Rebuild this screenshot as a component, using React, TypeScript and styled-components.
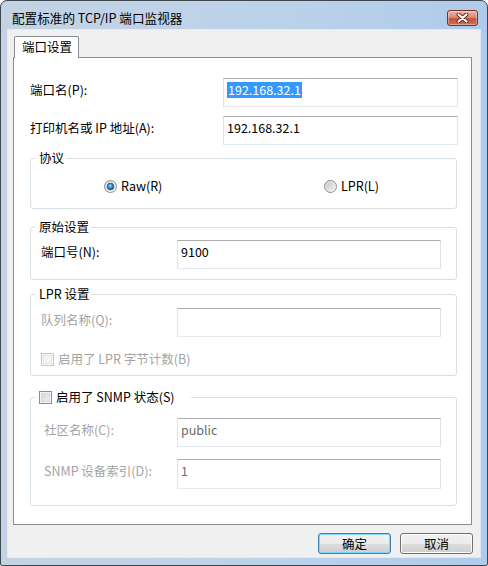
import React from 'react';
import styled, { createGlobalStyle } from 'styled-components';

const GlobalStyle = createGlobalStyle`
  html, body {
    margin: 0;
    padding: 0;
    background: #ffffff;
  }
  body {
    font-family: "Noto Sans CJK SC", "Noto Sans", sans-serif;
    font-size: 12.5px;
    color: #000;
  }
`;

const Window = styled.div`
  box-sizing: border-box;
  width: 488px;
  height: 566px;
  display: flex;
  flex-direction: column;
  border: 1px solid #3e4650;
  border-radius: 7px 7px 2px 2px;
  background: linear-gradient(to right, #c3d3e4 0%, #bcd2ea 55%, #afcbeb 100%);
  overflow: hidden;
`;

const TitleBar = styled.div`
  box-sizing: border-box;
  height: 29px;
  flex: none;
  display: flex;
  align-items: flex-start;
  padding: 9px 9px 0 11px;
`;

const Title = styled.div`
  flex: 1;
  line-height: 16px;
  font-size: 12.6px;
  color: #000;
  white-space: nowrap;
`;

const CloseButton = styled.div`
  box-sizing: border-box;
  width: 31px;
  height: 16px;
  border: 1px solid #7a3227;
  border-radius: 3px;
  background: linear-gradient(to bottom, #eab3a6 0%, #dc8a76 45%, #c8513a 55%, #d2705a 100%);
  box-shadow: inset 0 0 0 1px rgba(255, 255, 255, 0.35);
  display: flex;
  align-items: center;
  justify-content: center;
`;

const Client = styled.div`
  flex: 1;
  display: flex;
  flex-direction: column;
  margin: 0 7px 8px 7px;
  padding: 6px 8px 0 5px;
  background: #f0f0f0;
  box-shadow: 0 0 0 1px rgba(255, 255, 255, 0.55);
`;

const TabStrip = styled.div`
  display: flex;
  position: relative;
  z-index: 1;
`;

const Tab = styled.div`
  margin-left: 1px;
  margin-bottom: -1px;
  padding: 2px 6px 3px 7px;
  line-height: 16px;
  background: #ffffff;
  border: 1px solid #898c95;
  border-bottom: none;
  border-radius: 2px 2px 0 0;
`;

const Panel = styled.div`
  box-sizing: border-box;
  height: 468px;
  display: flex;
  flex-direction: column;
  padding: 20px 13px 0 16px;
  background: #ffffff;
  border: 1px solid #898c95;
`;

const FieldRow = styled.div<{ $top?: number; $inputWidth: number }>`
  display: grid;
  grid-template-columns: 1fr ${p => p.$inputWidth}px;
  align-items: start;
  margin-top: ${p => p.$top ?? 0}px;
`;

const Label = styled.div<{ $disabled?: boolean }>`
  padding-top: 4px;
  line-height: 16px;
  white-space: nowrap;
  color: ${p => (p.$disabled ? '#a3a3a3' : '#000')};
`;

const TextBox = styled.div<{ $disabled?: boolean; $height?: number }>`
  box-sizing: border-box;
  height: ${p => p.$height ?? 29}px;
  padding: 3px 3px 0 3px;
  line-height: 16px;
  background: #ffffff;
  border: 1px solid #e2e3ea;
  border-top-color: #abadb3;
  border-bottom-color: #e3e9ef;
  color: ${p => (p.$disabled ? '#6d6d6d' : '#000')};
  white-space: nowrap;
  overflow: hidden;
`;

const Selected = styled.span`
  display: inline-block;
  padding: 0 1px;
  background: #3399ff;
  color: #ffffff;
`;

const Group = styled.fieldset<{ $top: number }>`
  margin: ${p => p.$top}px 1px 0 0;
  padding: 0;
  min-width: 0;
  border: 1px solid #d5dfe5;
  border-radius: 3px;
`;

const Legend = styled.legend<{ $padRight?: number }>`
  display: flex;
  align-items: center;
  gap: 4px;
  margin-left: 4px;
  padding: 0 ${p => p.$padRight ?? 2}px 0 4px;
  line-height: 16px;
  color: #000;
`;

const GroupBody = styled.div<{ $pad: string }>`
  display: flex;
  flex-direction: column;
  padding: ${p => p.$pad};
`;

const RadioRow = styled.div`
  display: grid;
  grid-template-columns: 220px auto;
  padding-left: 73px;
`;

const RadioOption = styled.label`
  display: flex;
  align-items: center;
  gap: 4px;
  line-height: 16px;
`;

const CheckRow = styled.div<{ $top: number }>`
  display: flex;
  align-items: center;
  gap: 4px;
  margin-top: ${p => p.$top}px;
  line-height: 16px;
`;

const CheckText = styled.span<{ $disabled?: boolean }>`
  color: ${p => (p.$disabled ? '#a3a3a3' : '#000')};
  white-space: nowrap;
`;

const CheckBox = styled.span<{ $disabled?: boolean }>`
  box-sizing: border-box;
  display: inline-block;
  width: 13px;
  height: 13px;
  border: 1px solid ${p => (p.$disabled ? '#c6c6c6' : '#8e8f8f')};
  background: ${p =>
    p.$disabled
      ? '#f4f4f4'
      : 'linear-gradient(135deg, #cbcfd5 0%, #f6f6f6 100%)'};
  box-shadow: inset 0 0 0 1px ${p => (p.$disabled ? '#f7f7f7' : '#f4f4f4')},
    inset 0 0 0 2px ${p => (p.$disabled ? '#e6e6e6' : '#d9dcdf')};
`;

const ButtonRow = styled.div`
  display: flex;
  justify-content: flex-end;
  gap: 9px;
  margin-top: 8px;
  margin-right: -1px;
`;

const DialogButton = styled.div<{ $default?: boolean }>`
  box-sizing: border-box;
  width: 73px;
  height: 21px;
  display: flex;
  align-items: center;
  justify-content: center;
  line-height: 16px;
  border: 1px solid ${p => (p.$default ? '#3c7fb1' : '#707070')};
  border-radius: 3px;
  background: linear-gradient(to bottom, #f2f2f2 0%, #ebebeb 50%, #dddddd 51%, #cfcfcf 100%);
  box-shadow: inset 0 0 0 1px ${p => (p.$default ? '#7fd8fa' : '#fcfcfc')};
`;

const Radio: React.FC<{ checked?: boolean; id: string }> = ({ checked, id }) => (
  <svg width="13" height="13" viewBox="0 0 13 13">
    <defs>
      <linearGradient id={`${id}-ring`} x1="0" y1="0" x2="1" y2="1">
        <stop offset="0" stopColor="#d6d6d6" />
        <stop offset="1" stopColor="#f8f8f8" />
      </linearGradient>
      <radialGradient id={`${id}-dot`} cx="0.45" cy="0.4" r="0.6">
        <stop offset="0" stopColor="#a6e4fa" />
        <stop offset="0.5" stopColor="#3b8fc9" />
        <stop offset="1" stopColor="#14467a" />
      </radialGradient>
      <linearGradient id={`${id}-off`} x1="0" y1="0" x2="1" y2="1">
        <stop offset="0" stopColor="#c9c9c9" />
        <stop offset="1" stopColor="#f2f2f2" />
      </linearGradient>
    </defs>
    <circle cx="6.5" cy="6.5" r="6" fill={`url(#${id}-ring)`} stroke="#8f8f8f" strokeWidth="1" />
    {checked ? (
      <circle cx="6.5" cy="6.5" r="3.4" fill={`url(#${id}-dot)`} stroke="#1d4f7f" strokeWidth="0.6" />
    ) : (
      <circle cx="6.5" cy="6.5" r="4" fill={`url(#${id}-off)`} />
    )}
  </svg>
);

const CloseGlyph = () => (
  <svg width="13" height="10" viewBox="0 0 13 10">
    <path d="M2.5 1.5 L10.5 8.5 M10.5 1.5 L2.5 8.5" stroke="#5a2a22" strokeWidth="4" strokeLinecap="round" />
    <path d="M2.5 1.5 L10.5 8.5 M10.5 1.5 L2.5 8.5" stroke="#ffffff" strokeWidth="2.2" strokeLinecap="round" />
  </svg>
);

const App: React.FC = () => {
  return (
    <>
      <GlobalStyle />
      <Window>
        <TitleBar>
          <Title>配置标准的 TCP/IP 端口监视器</Title>
          <CloseButton>
            <CloseGlyph />
          </CloseButton>
        </TitleBar>
        <Client>
          <TabStrip>
            <Tab>端口设置</Tab>
          </TabStrip>
          <Panel>
            <FieldRow $inputWidth={235}>
              <Label>端口名(P):</Label>
              <TextBox>
                <Selected>192.168.32.1</Selected>
              </TextBox>
            </FieldRow>
            <FieldRow $top={9} $inputWidth={235}>
              <Label>打印机名或 IP 地址(A):</Label>
              <TextBox>192.168.32.1</TextBox>
            </FieldRow>

            <Group $top={5}>
              <Legend>协议</Legend>
              <GroupBody $pad="12px 15px 14px 0">
                <RadioRow>
                  <RadioOption>
                    <Radio checked id="raw" />
                    <span>Raw(R)</span>
                  </RadioOption>
                  <RadioOption>
                    <Radio id="lpr" />
                    <span>LPR(L)</span>
                  </RadioOption>
                </RadioRow>
              </GroupBody>
            </Group>

            <Group $top={10}>
              <Legend>原始设置</Legend>
              <GroupBody $pad="5px 15px 10px 10px">
                <FieldRow $inputWidth={264}>
                  <Label>端口号(N):</Label>
                  <TextBox>9100</TextBox>
                </FieldRow>
              </GroupBody>
            </Group>

            <Group $top={6}>
              <Legend>LPR 设置</Legend>
              <GroupBody $pad="6px 15px 8px 10px">
                <FieldRow $inputWidth={264}>
                  <Label $disabled>队列名称(Q):</Label>
                  <TextBox $disabled />
                </FieldRow>
                <CheckRow $top={14}>
                  <CheckBox $disabled />
                  <CheckText $disabled>启用了 LPR 字节计数(B)</CheckText>
                </CheckRow>
              </GroupBody>
            </Group>

            <Group $top={13}>
              <Legend $padRight={16}>
                <CheckBox />
                <CheckText>启用了 SNMP 状态(S)</CheckText>
              </Legend>
              <GroupBody $pad="13px 15px 16px 13px">
                <FieldRow $inputWidth={264}>
                  <Label $disabled>社区名称(C):</Label>
                  <TextBox $disabled>public</TextBox>
                </FieldRow>
                <FieldRow $top={12} $inputWidth={264}>
                  <Label $disabled>SNMP 设备索引(D):</Label>
                  <TextBox $disabled $height={30}>1</TextBox>
                </FieldRow>
              </GroupBody>
            </Group>
          </Panel>
          <ButtonRow>
            <DialogButton $default>确定</DialogButton>
            <DialogButton>取消</DialogButton>
          </ButtonRow>
        </Client>
      </Window>
    </>
  );
};

export default App;
